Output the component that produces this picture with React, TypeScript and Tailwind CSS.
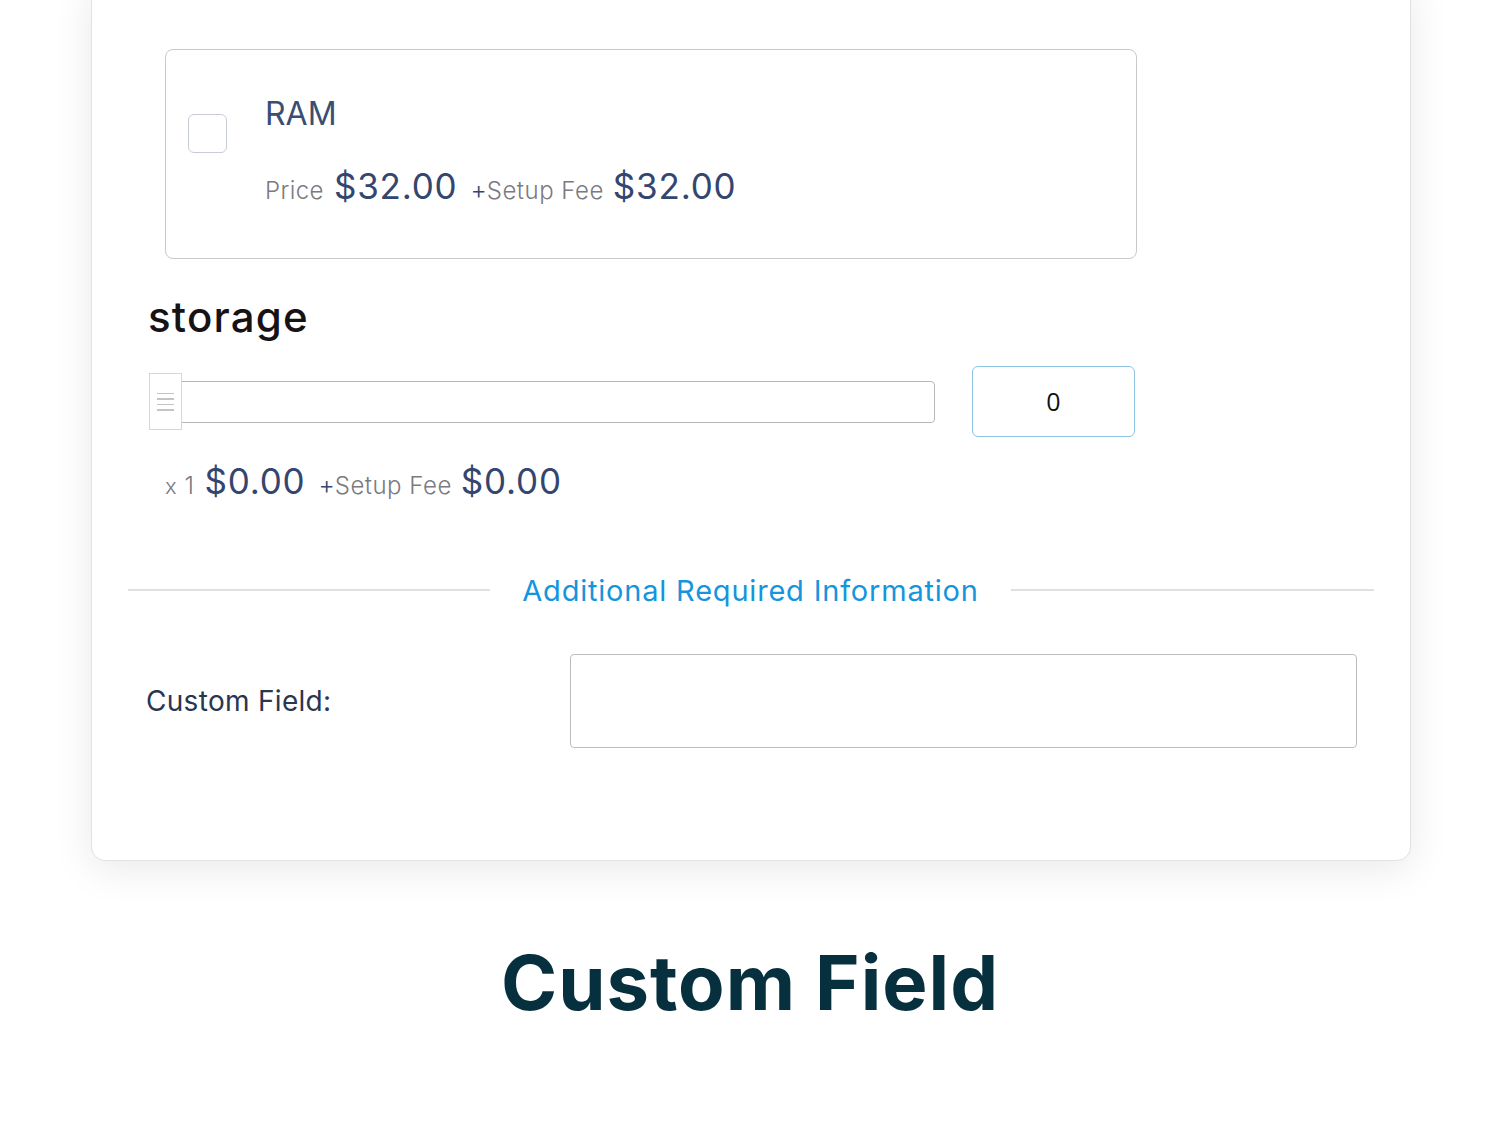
import React from "react";

const body = { fontFamily: "Inter, 'Open Sans', sans-serif" };
const head = { fontFamily: "Inter, Lato, sans-serif" };

function PriceLine({ lead, price, fee }: { lead: React.ReactNode; price: string; fee: string }) {
  return (
    <div className="flex items-baseline text-[#7a7a80] font-light" style={body}>
      {lead}
      <span className="text-[35px] text-[#34466f] font-normal tracking-[0.8px]">{price}</span>
      <span className="ml-[13px] text-[25px] text-[#34466f]">+</span>
      <span className="text-[24px] tracking-[0.5px]">Setup Fee</span>
      <span className="ml-[9px] text-[35px] text-[#34466f] font-normal tracking-[0.8px]">{fee}</span>
    </div>
  );
}

export default function App() {
  return (
    <div className="w-[1500px] h-[1125px] bg-white overflow-hidden">
      <div className="-mt-[20px] ml-[91px] w-[1320px] h-[881px] bg-white border border-[#e2e2e2] rounded-[14px] shadow-[0_8px_40px_rgba(0,0,0,0.09)] px-[36px] pt-[68px]">
        {/* RAM option */}
        <div className="ml-[37px] w-[972px] h-[210px] border border-[#c9c9cc] rounded-[8px] flex items-start">
          <div className="mt-[64px] ml-[22px] w-[39px] h-[39px] border border-[#c8ccd4] rounded-[6px]" />
          <div className="ml-[38px] pt-[44px]">
            <div className="text-[32px] leading-[40px] text-[#3b4d72]" style={body}>RAM</div>
            <div className="mt-[26px]">
              <PriceLine lead={<span className="text-[24px] mr-[10px] tracking-[0.4px]">Price</span>} price="$32.00" fee="$32.00" />
            </div>
          </div>
        </div>

        {/* storage */}
        <div className="ml-[20px] mt-[32px] text-[42px] leading-[52px] font-medium tracking-[1.2px] text-[#171214]" style={head}>storage</div>
        <div className="ml-[21px] mt-[23px] flex items-center">
          <div className="flex items-center">
            <div className="w-[33px] h-[57px] bg-white border border-[#d6d6d6] flex flex-col items-center justify-center gap-[4px] z-10">
              <span className="block w-[17px] h-[1.5px] bg-[#c4c4c4]" />
              <span className="block w-[17px] h-[1.5px] bg-[#c4c4c4]" />
              <span className="block w-[17px] h-[1.5px] bg-[#c4c4c4]" />
              <span className="block w-[17px] h-[1.5px] bg-[#c4c4c4]" />
            </div>
            <div className="-ml-px w-[754px] h-[42px] border border-[#b9b6b8] rounded-r-[4px]" />
          </div>
          <div className="ml-[37px] w-[163px] h-[71px] border border-[#8fc3e3] rounded-[6px] flex items-center justify-center text-[25px] text-[#111]" style={{ fontFamily: "'Open Sans', sans-serif" }}>
            0
          </div>
        </div>
        <div className="ml-[37px] mt-[18px]">
          <PriceLine
            lead={
              <span className="text-[24px] mr-[10px] tracking-[0.5px]">
                <span className="text-[22px]">x</span> 1
              </span>
            }
            price="$0.00"
            fee="$0.00"
          />
        </div>

        {/* divider */}
        <div className="mt-[61px] flex items-center">
          <div className="w-[362px] h-[2px] bg-[#e0e0e0]" />
          <div className="flex-1 text-center text-[29px] text-[#1495dc] tracking-[0.8px]" style={head}>Additional Required Information</div>
          <div className="w-[363px] h-[2px] bg-[#e0e0e0]" />
        </div>

        {/* custom field row */}
        <div className="mt-[42px] flex items-center">
          <div className="ml-[18px] w-[424px] text-[28px] text-[#2a3650] tracking-[0.3px]" style={body}>Custom Field:</div>
          <div className="w-[787px] h-[94px] border border-[#bdbdbd] rounded-[4px]" />
        </div>
      </div>

      <div className="mt-[76px] text-center text-[76px] leading-[90px] font-bold tracking-[1px] text-[#06303d]" style={head}>
        Custom Field
      </div>
    </div>
  );
}
